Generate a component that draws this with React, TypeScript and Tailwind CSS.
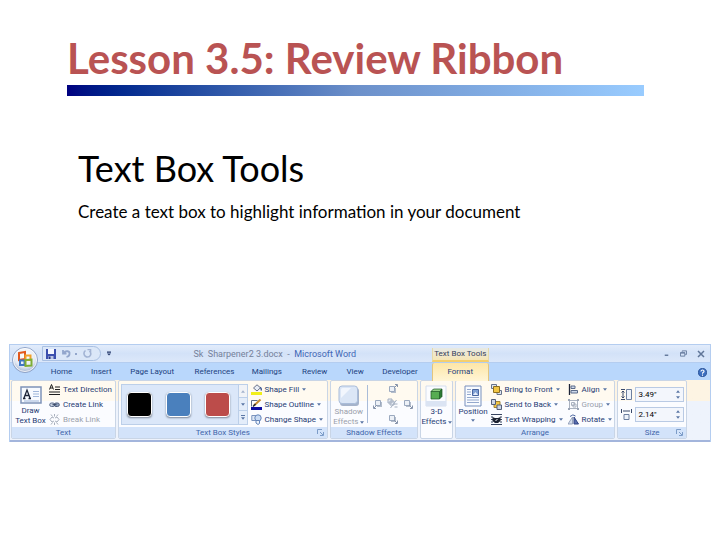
import React from 'react';

type Children = {children?: React.ReactNode};

function Caret() {
    return (
        <svg viewBox="0 0 5 3" className="w-[4px] h-[3px] shrink-0" fill="#5a76a5" aria-hidden="true">
            <path d="M0 0h5L2.5 3z"/>
        </svg>
    );
}

function Launcher({label}: {label: string}) {
    return (
        <button aria-label={label} className="absolute right-[3px] top-[2px]">
            <svg viewBox="0 0 7 7" className="w-[7px] h-[7px]" fill="none" stroke="#7c9cc8">
                <path d="M.5 5V.5H5M3 3l3 3M6.5 3v3.500H3"/>
            </svg>
        </button>
    );
}

function Group({label, launcher, children}: Children & {label: string; launcher?: boolean}) {
    return (
        <section
            aria-label={label || 'Effects'}
            className="min-w-0 flex flex-col rounded-[2px] border border-[#c9d5e6] bg-linear-to-b from-[#fffaf0] from-35% to-[#fbfcff] to-35% overflow-hidden"
        >
            <div className="h-[46px] flex">{children}</div>
            {label && (
                <h3 className="relative h-[11px] bg-[#d3e3fa] text-center text-[8px] leading-[11px] text-[#3f66ab]">
                    {label}
                    {launcher && <Launcher label={`${label} settings`}/>}
                </h3>
            )}
        </section>
    );
}

function Command({icon, label, menu, disabled}: {
    icon: React.ReactNode;
    label: string;
    menu?: boolean;
    disabled?: boolean;
}) {
    return (
        <button
            disabled={disabled}
            className="flex items-center gap-[3px] h-[15px] text-[8px] leading-[10px] text-[#1f3b73] whitespace-nowrap disabled:text-[#9a9fab]"
        >
            {icon}
            <span>{label}</span>
            {menu && <Caret/>}
        </button>
    );
}

function Icon({children}: Children) {
    return (
        <svg viewBox="0 0 11 11" className="w-[11px] h-[11px] shrink-0" fill="none" aria-hidden="true">
            {children}
        </svg>
    );
}

function BigIcon({children}: Children) {
    return (
        <svg viewBox="0 0 22 22" className="w-[22px] h-[22px]" fill="none" aria-hidden="true">
            {children}
        </svg>
    );
}

function OfficeButton() {
    return (
        <button aria-label="Office Button" className="absolute left-[1px] top-[1px]">
            <svg viewBox="0 0 28 28" className="w-[28px] h-[28px]" fill="none">
                <defs>
                    <radialGradient id="orb" cx=".5" cy=".35" r=".65">
                        <stop offset="0" stopColor="#fff"/>
                        <stop offset=".65" stopColor="#e4eaf4"/>
                        <stop offset="1" stopColor="#9aaccc"/>
                    </radialGradient>
                </defs>
                <circle cx="14" cy="14" r="12.500" fill="url(#orb)" stroke="#8fa3c8"/>
                <circle cx="14" cy="14" r="11.500" stroke="#fff" strokeOpacity=".8"/>
                <path d="M8 7l6-1v7l-6 1z" stroke="#e2581d" strokeWidth="2"/>
                <path d="M14.500 9.500h5v4.500h-5z" stroke="#f0a02c" strokeWidth="2"/>
                <path d="M9 14.500h4.500V19H9z" stroke="#3f76c4" strokeWidth="2"/>
                <path d="M14.500 14l6-.5v6l-6 .5z" stroke="#7fae35" strokeWidth="2"/>
            </svg>
        </button>
    );
}

function QuickAccess() {
    return (
        <div className="flex items-center gap-[6px]">
            <div className="flex items-center gap-[6px] h-[15px] pl-[3px] pr-[8px] rounded-r-full border border-[#a9c0e2] bg-[#dbe7f8]">
                <button aria-label="Save">
                    <svg viewBox="0 0 10 10" className="w-[10px] h-[10px]">
                        <path d="M0 0h10v10H0z" fill="#3b4fae"/>
                        <path d="M2 0h6v5H2z" fill="#f4f7ff"/>
                        <path d="M2.500 7h5v3h-5z" fill="#b9c4e4"/>
                        <path d="M3 7.500h1.500V10H3z" fill="#26347c"/>
                    </svg>
                </button>
                <button aria-label="Undo" className="flex items-center gap-[4px]">
                    <svg viewBox="0 0 9 9" className="w-[9px] h-[9px]" fill="none" stroke="#92a6cc" strokeWidth="1.800">
                        <path d="M1 1v3.500h3.500M1.500 4C4 1 8 2 7.500 5c0 1.500-1 2.500-3 3"/>
                    </svg>
                    <span className="w-[2px] h-[2px] bg-[#92a6cc]"/>
                </button>
                <button aria-label="Repeat">
                    <svg viewBox="0 0 9 9" className="w-[9px] h-[9px]" fill="none" stroke="#a3b4d4" strokeWidth="1.600">
                        <path d="M2.500 1.500C-.5 4 1.500 8 4.500 8S9 4.500 6.500 2M4.500.5h3v3"/>
                    </svg>
                </button>
            </div>
            <button aria-label="Customize Quick Access Toolbar">
                <svg viewBox="0 0 5 5" className="w-[4px] h-[5px]" fill="#24386b">
                    <path d="M0 0h5v1.500H0zM0 2.500h5L2.500 5z"/>
                </svg>
            </button>
        </div>
    );
}

function WindowButtons() {
    return (
        <div className="flex items-center justify-end gap-[10px] pr-[5px] text-[#5f7598]">
            <button aria-label="Minimize">
                <svg viewBox="0 0 8 8" className="w-[7px] h-[7px]" stroke="currentColor" strokeWidth="1.600">
                    <path d="M2 6h4"/>
                </svg>
            </button>
            <button aria-label="Restore">
                <svg viewBox="0 0 8 8" className="w-[7px] h-[7px]" fill="none" stroke="currentColor">
                    <path d="M2.500 2V1H7.500V5H6M.5 3h5v4h-5zM.5 3.500h5"/>
                </svg>
            </button>
            <button aria-label="Close">
                <svg viewBox="0 0 8 8" className="w-[8px] h-[8px]" fill="none" stroke="currentColor" strokeWidth="1.500">
                    <path d="M1 1l6 6M7 1L1 7"/>
                </svg>
            </button>
        </div>
    );
}

const tabs = ['Home', 'Insert', 'Page Layout', 'References', 'Mailings', 'Review', 'View', 'Developer'];

function RibbonHeader() {
    return (
        <div className="relative">
            <div className="h-[18px] pl-[32px] grid grid-cols-[76fr_315fr_57fr_222fr] items-center bg-linear-to-b from-[#e2ecfb] via-[#d3e2f8] to-[#dce8fa] border-b border-[#b4cdf0]">
                <QuickAccess/>
                <p className="text-center text-[9px] leading-[12px] whitespace-nowrap text-[#75819a]">
                    Sk&nbsp; Sharpener2 3.docx &nbsp;-&nbsp; <span className="text-[#3f66b5]">Microsoft Word</span>
                </p>
                <p className="self-end h-[14px] border-x border-[#e6d9a8] border-b-2 border-b-[#f5cf6d] bg-linear-to-b from-[#e6e9e6] to-[#f7e6b4] text-center text-[8px] leading-[12px] whitespace-nowrap text-[#33405e]">
                    Text Box Tools
                </p>
                <WindowButtons/>
            </div>
            <nav className="h-[17px] pl-[32px] grid grid-cols-[391fr_57fr_222fr] bg-[#b9d7fc] text-[8px] leading-[18px] text-[#1c3f80]">
                <div className="grid grid-cols-[39fr_41fr_61fr_64fr_41fr_55fr_26fr_64fr] justify-items-center whitespace-nowrap">
                    {tabs.map((tab) => (
                        <a key={tab} href="#">{tab}</a>
                    ))}
                </div>
                <a
                    href="#"
                    aria-current="page"
                    className="rounded-t-[2px] border-x border-[#e3c67f] bg-linear-to-b from-[#fde6a6] to-[#fff5d6] text-center"
                >
                    Format
                </a>
                <div className="flex items-center justify-end pr-[3px]">
                    <button aria-label="Help">
                        <svg viewBox="0 0 10 10" className="w-[9px] h-[9px]" fill="none">
                            <circle cx="5" cy="5" r="4.500" fill="#3c6fc0" stroke="#274f95"/>
                            <path d="M3.300 3.800C3.300 1.700 6.800 1.800 6.700 3.700 6.600 4.800 5 4.800 5 6.300M5 7.300v1.200" stroke="#fff" strokeWidth="1.200"/>
                        </svg>
                    </button>
                </div>
            </nav>
            <OfficeButton/>
        </div>
    );
}

function TextGroup() {
    return (
        <Group label="Text">
            <button className="w-[37px] shrink-0 flex flex-col items-center pt-[5px] text-[8px] leading-[10px] text-[#1f3b73]">
                <svg viewBox="0 0 22 18" className="w-[22px] h-[18px] mb-[2px]" fill="none" aria-hidden="true">
                    <path d="M1 1h20v16H1z" fill="#f7faff" stroke="#7f93b8" strokeWidth="1.500"/>
                    <path d="M4 12L7 4l3 8M5 9.500h4M3 12.500h2.500M8.500 12.500H11" stroke="#1d2438" strokeWidth="1.300"/>
                    <path d="M13 5.500h6M13 8h6M13 10.500h6M4 15h15" stroke="#9fb6da"/>
                </svg>
                <span>Draw</span>
                <span className="whitespace-nowrap">Text Box</span>
            </button>
            <div className="pt-[1px] min-w-0">
                <Command
                    label="Text Direction"
                    icon={<Icon><path d="M.5 5.500L2.500.5l2 5M1 4h3M6 3h5M6 5.500h5M0 8h11M0 10.500h11" stroke="#1d1d1d"/></Icon>}
                />
                <Command
                    label="Create Link"
                    icon={
                        <Icon>
                            <rect x=".7" y="4" width="5" height="3.500" rx="1.700" fill="#c4cfdf" stroke="#5b6b8a"/>
                            <rect x="5.300" y="4" width="5" height="3.500" rx="1.700" fill="#8fa0bd" stroke="#4d5c7b"/>
                            <path d="M3.500 5.700h4" stroke="#33415f"/>
                        </Icon>
                    }
                />
                <Command
                    disabled
                    label="Break Link"
                    icon={
                        <Icon>
                            <path d="M5 4L3 3 1 5.500 3 8l2-1M6 4l2-1 2 2.500L8 8 6 7M5.500 0v2.500M5.500 8.500V11M2 .5l1.500 2M9 .5l-1.500 2M2 10.500l1.500-2M9 10.500l-1.500-2" stroke="#a9b0bd"/>
                        </Icon>
                    }
                />
            </div>
        </Group>
    );
}

function StylesGroup() {
    return (
        <Group label="Text Box Styles" launcher>
            <div className="w-[127px] h-[41px] mt-[3px] ml-[2px] shrink-0 flex border border-[#bccfe9] bg-[#dbe7f9]">
                <div className="grow flex items-center gap-[14px] pl-[5px]">
                    <button aria-label="Black style" className="w-[25px] h-[25px] rounded-[4px] border border-white bg-black shadow-[0_1px_2px_#7a8494]"/>
                    <button aria-label="Blue style" className="w-[25px] h-[25px] rounded-[4px] border border-white bg-[#4a80bd] shadow-[0_1px_2px_#7a8494]"/>
                    <button aria-label="Red style" className="w-[25px] h-[25px] rounded-[4px] border border-white bg-[#bc4c4a] shadow-[0_1px_2px_#7a8494]"/>
                </div>
                <div className="w-[9px] grid grid-rows-3 border-l border-[#bccfe9] bg-[#e4edfa] divide-y divide-[#bccfe9]">
                    <button aria-label="Scroll up" className="flex items-center justify-center bg-[#f1f3f7]">
                        <span className="rotate-180 opacity-50"><Caret/></span>
                    </button>
                    <button aria-label="Scroll down" className="flex items-center justify-center"><Caret/></button>
                    <button aria-label="More styles" className="flex flex-col items-center justify-center gap-[1px]">
                        <span className="w-[4px] h-[1px] bg-[#5a76a5]"/>
                        <Caret/>
                    </button>
                </div>
            </div>
            <div className="pt-[1px] pl-[3px] min-w-0">
                <Command
                    menu
                    label="Shape Fill"
                    icon={
                        <Icon>
                            <path d="M2.500 4L6 .8l3.500 3L6 7z" fill="#e8edf5" stroke="#67718a"/>
                            <path d="M9 3.500c1.500.5 1.500 2 1 3" stroke="#3f5a96" strokeWidth="1.400"/>
                            <path d="M0 8h11v3H0z" fill="#f2ef18"/>
                        </Icon>
                    }
                />
                <Command
                    menu
                    label="Shape Outline"
                    icon={
                        <Icon>
                            <path d="M.5 7.500v-6h6" stroke="#5d6b86"/>
                            <path d="M3 6.500L9.500.5" stroke="#c58a2e" strokeWidth="2"/>
                            <path d="M2 7.500l2.500-2.500" stroke="#20242e" strokeWidth="1.500"/>
                            <path d="M0 8h11v3H0z" fill="#0b0ba0"/>
                        </Icon>
                    }
                />
                <Command
                    menu
                    label="Change Shape"
                    icon={
                        <Icon>
                            <path d="M.8 1.500h5v5h-5z" fill="#dfe8f6" stroke="#7b93bd"/>
                            <circle cx="7" cy="4" r="3.200" fill="#c9dbf4" stroke="#6484b9"/>
                            <path d="M5 6.500h3.500v3L7 10.500 5 9z" fill="#eef4fc" stroke="#6484b9"/>
                        </Icon>
                    }
                />
            </div>
        </Group>
    );
}

function NudgeIcon({arrow}: {arrow: string}) {
    return (
        <svg viewBox="0 0 11 11" className="w-[11px] h-[11px]" fill="none" aria-hidden="true">
            <path d="M4 4h5v5H4z" fill="#b4bdcb"/>
            <path d="M2.500 2.500h5v5h-5z" fill="#edf1f7" stroke="#9ba9bf"/>
            <path d={arrow} stroke="#8794ab"/>
        </svg>
    );
}

function ShadowGroup() {
    return (
        <Group label="Shadow Effects">
            <button disabled className="w-[36px] shrink-0 flex flex-col items-center pt-[4px] text-[8px] leading-[10px] text-[#9a9fab]">
                <BigIcon>
                    <rect x="2" y="3" width="19" height="18" rx="3" fill="#a5b3cb"/>
                    <rect x="1" y="1" width="18.500" height="17.500" rx="3" fill="#dbe6f6" stroke="#a9bcd9"/>
                    <path d="M3 4.500Q3 3 4.500 3H13L3 13z" fill="#f2f6fd"/>
                </BigIcon>
                <span>Shadow</span>
                <span className="flex items-center gap-[2px]">Effects <Caret/></span>
            </button>
            <div className="h-[38px] mt-[4px] border-l border-[#a9bcd9]"/>
            <div className="grow grid grid-cols-3 grid-rows-3 place-items-center py-[1px] px-[3px]">
                <button aria-label="Nudge Shadow Up" className="col-start-2"><NudgeIcon arrow="M7 4l3-3M8 .5h2.500V3"/></button>
                <button aria-label="Nudge Shadow Left" className="col-start-1 row-start-2"><NudgeIcon arrow="M4 7l-3 3M.5 7.500V10.500H3"/></button>
                <button aria-label="Shadow On/Off" className="col-start-2 row-start-2">
                    <svg viewBox="0 0 11 11" className="w-[11px] h-[11px]" fill="none">
                        <path d="M1 1h4v4H1zM3 3h4v4H3z" fill="#e8edf5" stroke="#a3aebf"/>
                        <path d="M9.500 2L3.500 10M7 6h3.500M7.500 9h3" stroke="#a3aebf"/>
                    </svg>
                </button>
                <button aria-label="Nudge Shadow Right" className="col-start-3 row-start-2"><NudgeIcon arrow="M7 7l3 3M10.500 7.500v3H8"/></button>
                <button aria-label="Nudge Shadow Down" className="col-start-2 row-start-3"><NudgeIcon arrow="M7 7l3 3M10.500 7.500v3H8"/></button>
            </div>
        </Group>
    );
}

function EffectsGroup() {
    return (
        <Group label="">
            <button className="grow flex flex-col items-center pt-[4px] text-[8px] leading-[10px] text-[#1f3b73] whitespace-nowrap">
                <BigIcon>
                    <path d="M1 1h20v20H1z" fill="#fbfcff" stroke="#d5deee"/>
                    <path d="M1 16h20v5H1z" fill="#dbe4f3"/>
                    <path d="M6 6.500L8.500 4H17v7.500L14.500 14H6z" fill="#2c7a33"/>
                    <path d="M6 6.500h8.500V14H6z" fill="#57ad52"/>
                    <path d="M6 6.500L8.500 4H17l-2.500 2.500z" fill="#92cf86"/>
                    <path d="M6 6.500h8.500V14H6zM6 6.500L8.500 4H17v7.500L14.500 14M14.500 6.500L17 4" stroke="#1f5727" strokeWidth=".7"/>
                </BigIcon>
                <span>3-D</span>
                <span className="flex items-center gap-[1px]">Effects <Caret/></span>
            </button>
        </Group>
    );
}

function ArrangeGroup() {
    return (
        <Group label="Arrange">
            <button className="w-[35px] shrink-0 flex flex-col items-center pt-[4px] text-[8px] leading-[10px] text-[#1f3b73]">
                <BigIcon>
                    <path d="M3 1h16v20H3z" fill="#f8fbff" stroke="#7890bd"/>
                    <path d="M10.500 4.500h6v6h-6z" fill="#7fa0d4" stroke="#4a66a0"/>
                    <path d="M11 10l2.500-3 2.500 3z" fill="#e6eefb"/>
                    <path d="M5 4.500h4M5 7h4M5 9.500h4M5 12.500h12M5 15h12M5 17.500h12" stroke="#93a8cd"/>
                </BigIcon>
                <span>Position</span>
                <span className="pt-[2px]"><Caret/></span>
            </button>
            <div className="w-[77px] shrink-0 pt-[1px]">
                <Command
                    menu
                    label="Bring to Front"
                    icon={
                        <Icon>
                            <path d="M.5.500h5v4h-5zM6 6.500h4.500v4H6z" fill="#dfe6f0" stroke="#66728a"/>
                            <path d="M2.500 2.500h6v6h-6z" fill="#f2c644" stroke="#8e6f1e"/>
                        </Icon>
                    }
                />
                <Command
                    menu
                    label="Send to Back"
                    icon={
                        <Icon>
                            <path d="M3 2.500h6v6H3z" fill="#f2c644" stroke="#a08232"/>
                            <path d="M.5.500h4v5h-4zM6 6h4.500v4.500H6z" fill="#cbd5e5" stroke="#535f78"/>
                        </Icon>
                    }
                />
                <Command
                    menu
                    label="Text Wrapping"
                    icon={
                        <Icon>
                            <path d="M0 .500h11M0 10.500h11M0 3h2M9 3h2M0 5.500h2M9 5.500h2M0 8h2M9 8h2" stroke="#37445f"/>
                            <path d="M1.500 3l2.500 1h3l2.500-1v4L7 9H4L1.500 7z" fill="#1c2230"/>
                            <path d="M4.500 6.500l2-1" stroke="#fff"/>
                        </Icon>
                    }
                />
            </div>
            <div className="pt-[1px] min-w-0">
                <Command
                    menu
                    label="Align"
                    icon={
                        <Icon>
                            <path d="M1.500 0v11" stroke="#1d2438" strokeWidth="1.300"/>
                            <path d="M3 2h4v2.500H3zM3 6.500h6.500V9H3z" fill="#cdd8ea" stroke="#5b6b8a"/>
                        </Icon>
                    }
                />
                <Command
                    menu
                    disabled
                    label="Group"
                    icon={
                        <Icon>
                            <path d="M1.500 1.500h8v8h-8zM3.500 3.500h3v3h-3zM5 5h3v3H5z" stroke="#aab2c0"/>
                            <path d="M0 0h2v2H0zM9 0h2v2H9zM0 9h2v2H0zM9 9h2v2H9z" fill="#9aa4b5"/>
                        </Icon>
                    }
                />
                <Command
                    menu
                    label="Rotate"
                    icon={
                        <Icon>
                            <path d="M0 10L4.500 3v7z" fill="#d6dfee" stroke="#8593ae" strokeWidth=".8"/>
                            <path d="M6 3v7h4.500z" fill="#5a6fae" stroke="#2f4384"/>
                            <path d="M2 2.500Q5-.5 7.500 2" stroke="#4a66a0"/>
                        </Icon>
                    }
                />
            </div>
        </Group>
    );
}

function SizeField({id, label, value, children}: Children & {id: string; label: string; value: string}) {
    return (
        <div className="flex items-center gap-[3px] h-[15px]">
            <label htmlFor={id} aria-label={label}>
                <Icon>{children}</Icon>
            </label>
            <div className="grow min-w-0 flex items-center h-[15px] border border-[#b9cae4] bg-[#f3f6fc]">
                <input
                    id={id}
                    defaultValue={value}
                    className="grow w-0 min-w-0 pl-[2px] bg-transparent text-[8px] leading-[12px] text-black outline-none"
                />
                <span className="flex flex-col gap-[3px] pr-[3px]">
                    <button aria-label={`Increase ${label}`} className="rotate-180"><Caret/></button>
                    <button aria-label={`Decrease ${label}`}><Caret/></button>
                </span>
            </div>
        </div>
    );
}

function SizeGroup() {
    return (
        <Group label="Size" launcher>
            <div className="grow min-w-0 flex flex-col gap-[5px] pt-[6px] pl-[3px] pr-[2px]">
                <SizeField id="height" label="Height" value={'3.49"'}>
                    <path d="M0 .500h4M0 10.500h4M2 2v7M.500 3.500L2 2l1.500 1.500M.500 7.500L2 9l1.500-1.500" stroke="#3a4a6b"/>
                    <path d="M5.500.500h5v10h-5z" fill="#eef3fb" stroke="#6c7f9f"/>
                </SizeField>
                <SizeField id="width" label="Width" value={'2.14"'}>
                    <path d="M.500 0v4M10.500 0v4M2 2h7" stroke="#3a4a6b"/>
                    <path d="M3 5.500h5v5H3z" fill="#eef3fb" stroke="#6c7f9f"/>
                </SizeField>
            </div>
        </Group>
    );
}

function Ribbon() {
    return (
        <div className="mx-[9px] border border-b-0 border-[#b4cdf0] bg-[#dfe9f8] font-[Roboto,sans-serif]">
            <RibbonHeader/>
            <div className="grid grid-cols-[104fr_209fr_88fr_32fr_160fr_69fr_20fr] gap-[2px] px-[1px] pb-[1px] bg-linear-to-b from-[#fdf4e3] from-35% to-[#eef3fc] to-35% border-b-2 border-[#a3b5dc]">
                <TextGroup/>
                <StylesGroup/>
                <ShadowGroup/>
                <EffectsGroup/>
                <ArrangeGroup/>
                <SizeGroup/>
            </div>
        </div>
    );
}

export default function App() {
    return (
        <main className="min-h-screen bg-white font-[Lato,sans-serif] text-black">
            <header className="pt-[32px] pl-[67px] pr-[76px]">
                <h1 className="text-[42px] leading-[53px] font-bold text-[#b95353] whitespace-nowrap">
                    Lesson 3.5: Review Ribbon
                </h1>
                <div className="h-[11px] bg-linear-to-r from-[#000080] via-[#6c90ca] to-[#99ccff]"/>
            </header>
            <section className="pt-[48px] pl-[78px] pr-[76px]">
                <h2 className="text-[36px] leading-[48px]">Text Box Tools</h2>
                <p className="pt-[8px] text-[17px] leading-[24px]">
                    Create a text box to highlight information in your document
                </p>
            </section>
            <div className="pt-[120px]">
                <Ribbon/>
            </div>
        </main>
    );
}
